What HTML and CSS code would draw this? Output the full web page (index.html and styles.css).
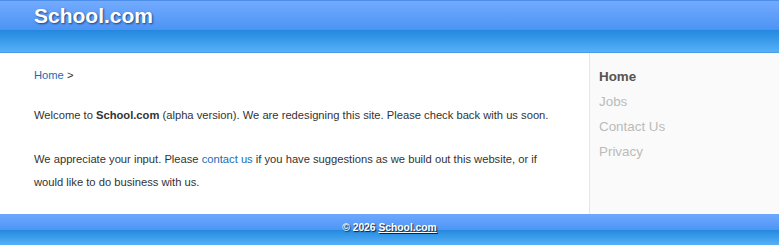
FILE: index.html
```html
<!DOCTYPE html>
<html>
<head>
  <meta charset="UTF-8">
  <title>School.com</title>
  <link rel="stylesheet" href="styles.css">
</head>
<body>
  <div class="header">
    <div class="header-top">
      <h1>School.com</h1>
    </div>
    <div class="header-bottom"></div>
  </div>

  <div class="page">
    <div class="main">
      <div class="breadcrumb"><a href="#">Home</a> &gt;</div>
      <p>Welcome to <b>School.com</b> (alpha version). We are redesigning this site. Please check back with us soon.</p>
      <p>We appreciate your input. Please <a href="#">contact us</a> if you have suggestions as we build out this website, or if would like to do business with us.</p>
    </div>
    <div class="sidebar">
      <a href="#" class="active">Home</a>
      <a href="#">Jobs</a>
      <a href="#">Contact Us</a>
      <a href="#">Privacy</a>
    </div>
  </div>

  <div class="footer">
    <div class="footer-top"></div>
    <div class="footer-bottom"></div>
    <div class="footer-text">&copy; 2026 <a href="#">School.com</a></div>
  </div>
</body>
</html>
```

FILE: styles.css
```css
* {
  margin: 0;
  padding: 0;
  box-sizing: border-box;
}

body {
  font-family: "Liberation Sans", Arial, sans-serif;
  background: #fff;
  color: #333;
  height: 245px;
  display: flex;
  flex-direction: column;
  overflow: hidden;
}

a {
  color: #1a6cb5;
  text-decoration: none;
}

.header {
  height: 53px;
  flex-shrink: 0;
  border-top: 1px solid #4a8ee8;
  border-bottom: 1px solid #4a9ae6;
}

.header-top {
  height: 29px;
  background: linear-gradient(#72abff, #4c93f4);
  padding-left: 34px;
  display: flex;
  align-items: center;
}

.header-top h1 {
  font-size: 21px;
  font-weight: bold;
  color: #fff;
  text-shadow: 1px 1px 2px #17427f;
}

.header-bottom {
  height: 22px;
  background: linear-gradient(#2388de, #55b0f8);
}

.page {
  flex: 1;
  min-height: 0;
  overflow: hidden;
  display: flex;
}

.main {
  flex: 1;
  padding: 15px 30px 0 34px;
  font-size: 11.2px;
}

.breadcrumb {
  line-height: 14px;
  margin-bottom: 22px;
}

.main p {
  line-height: 23px;
  margin-bottom: 21px;
}

.sidebar {
  width: 190px;
  background: #fafafa;
  border-left: 1px solid #e6e6e6;
  padding: 11px 0 0 9px;
  display: flex;
  flex-direction: column;
}

.sidebar a {
  font-size: 13.4px;
  line-height: 25px;
  color: #bbb;
}

.sidebar a.active {
  color: #555;
  font-weight: bold;
}

.footer {
  height: 31px;
  flex-shrink: 0;
  position: relative;
}

.footer-top {
  height: 16px;
  background: linear-gradient(#6ea8ff, #4f95f5);
}

.footer-bottom {
  height: 15px;
  background: linear-gradient(#2489df, #56b1f8);
}

.footer-text {
  position: absolute;
  left: 0;
  right: 0;
  top: 8px;
  text-align: center;
  font-size: 10.3px;
  font-weight: bold;
  color: #fff;
  text-shadow: 1px 1px 1px #123;
}

.footer-text a {
  color: #fff;
  text-decoration: underline;
}
```
